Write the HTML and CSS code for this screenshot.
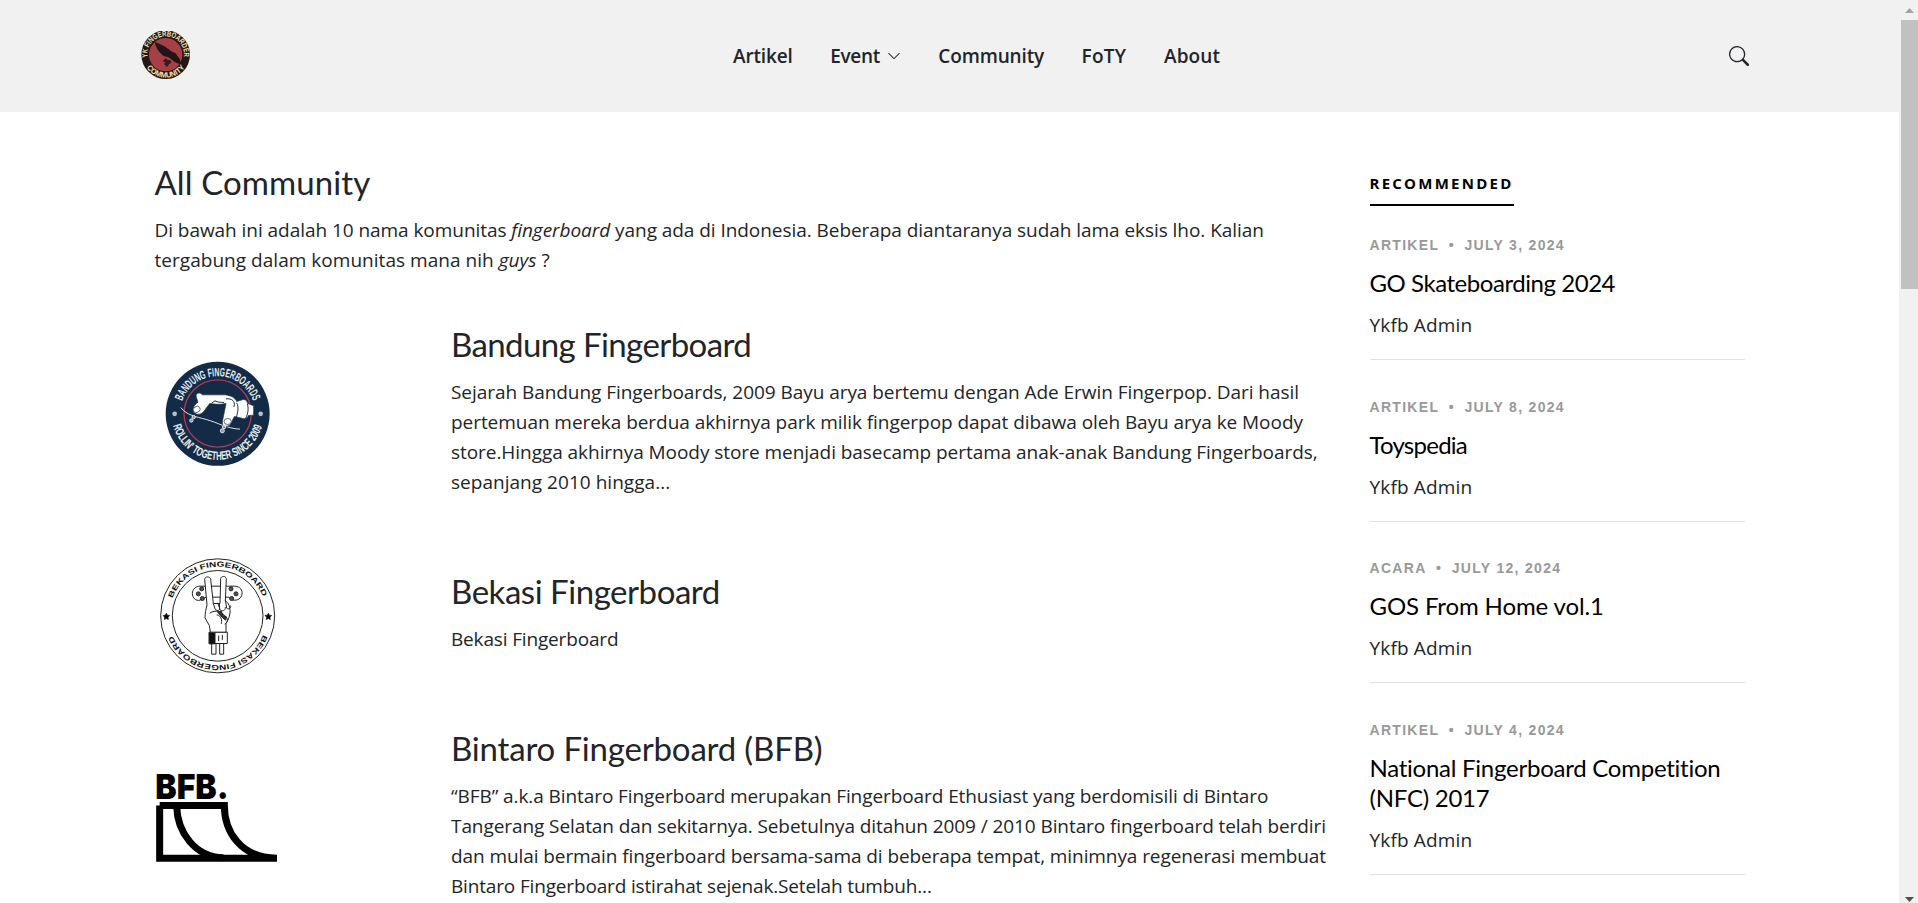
FILE: index.html
```html
<!DOCTYPE html>
<html lang="id">
<head>
<meta charset="utf-8">
<title>All Community</title>
<link rel="stylesheet" href="styles.css">
</head>
<body>
<div class="window">
<div class="page">
  <header class="header">
    <a class="brand">
      <svg class="brand-logo" viewBox="60 63 150 150">
        <defs>
          <path id="yk-top" d="M82.700 142.500A55 55 0 1 1 191.300 142.500"/>
          <path id="yk-bottom" d="M73.100 160A69 69 0 0 0 200.900 160"/>
        </defs>
        <circle cx="137" cy="134" r="73" fill="#251714"/>
        <circle cx="137" cy="134" r="50" fill="#a54146"/>
        <path d="M104 96c14 5 27 10 38 19 8 7 15 12 24 14l13 18 5 17-20-8-15-12c-5-4-12-4-18-6-10-8-21-17-27-42z" fill="#251417"/>
        <path d="M128 154l8-9 8 5 8 1 2 8-7 3-4 8-6-2-5-6 4-5z" fill="#3a1b1d"/>
        <text class="yk-text"><textPath href="#yk-top" textLength="188" lengthAdjust="spacingAndGlyphs">YK FINGERBOARDER</textPath></text>
        <text class="yk-text"><textPath href="#yk-bottom" startOffset="15" textLength="134" lengthAdjust="spacingAndGlyphs">COMMUNITY</textPath></text>
      </svg>
    </a>
    <nav class="nav">
      <a>Artikel</a>
      <a class="has-menu"><span class="nav-event">Event</span><svg class="chevron" viewBox="0 0 16 16"><path fill-rule="evenodd" d="M1.646 4.646a.5.5 0 0 1 .708 0L8 10.293l5.646-5.647a.5.5 0 0 1 .708.708l-6 6a.5.5 0 0 1-.708 0l-6-6a.5.5 0 0 1 0-.708z"/></svg></a>
      <a>Community</a>
      <a class="nav-foty">FoTY</a>
      <a class="nav-about">About</a>
    </nav>
    <svg class="search" viewBox="0 0 16 16"><path d="M11.742 10.344a6.500 6.500 0 1 0-1.397 1.398h-.001c.03.04.062.078.098.115l3.850 3.850a1 1 0 0 0 1.415-1.414l-3.850-3.850a1.007 1.007 0 0 0-.115-.1zM12 6.500a5.500 5.500 0 1 1-11 0 5.500 5.500 0 0 1 11 0z"/></svg>
  </header>

  <div class="content">
    <main class="main">
      <section class="intro">
        <h2 class="heading h-all">All Community</h2>
        <p class="text">Di bawah ini adalah 10 nama komunitas <em>fingerboard</em> yang ada di Indonesia. Beberapa diantaranya sudah lama eksis lho. Kalian<br><span class="loose">tergabung dalam komunitas mana nih <em>guys</em> ?</span></p>
      </section>

      <article class="row">
        <svg class="thumb" viewBox="45 31.500 375 375">
          <defs>
            <path id="bd-top" d="M126.600 182A113 113 0 0 1 339.400 182"/>
            <path id="bd-bottom" d="M99.500 255A138 138 0 0 0 366.500 255"/>
          </defs>
          <circle cx="233" cy="220" r="156" fill="#132b47"/>
          <circle cx="233" cy="219" r="101" fill="none" stroke="#a83c55" stroke-width="4"/>
          <circle cx="104" cy="220" r="7" fill="#b9c1cb"/><circle cx="362" cy="220" r="7" fill="#b9c1cb"/>
          <path d="M122 201c20 24 44 27 77 36s62 27 101 29" fill="none" stroke="#dfe4e9" stroke-width="3"/>
          <g fill="#fff" stroke="#132b47" stroke-width="2">
            <path d="M169 170c-4-13 12-16 18-7l69 0c18 3 30 9 34 20l16-5c9-3 15 2 17 11l18 7v28l-16 1c-3 10-13 11-20 8l-22-5-9 18c-4 13-22 15-26 6-3-7 2-20 3-28l7-35c-17 4-34 2-49 0l-17 23c-7 10-22 13-30 4-8-10 2-25 12-31z"/>
            <path d="M215 188l10-7c9 5 18 4 27 5M290 187c8 14 2 32-1 44M322 190c4 12 3 29-5 43M258 175c17-2 29 7 24 24" fill="none" stroke-width="3"/>
            <ellipse cx="170" cy="207" rx="11" ry="9" transform="rotate(-35 170 207)"/>
            <ellipse cx="263" cy="243" rx="11" ry="9"/>
          </g>
          <g fill="#8d99a8" stroke="#dfe4e9" stroke-width="3"><circle cx="161" cy="230" r="5"/><circle cx="154" cy="240" r="5"/><circle cx="252" cy="260" r="5"/><circle cx="247" cy="271" r="6"/></g>
          <text class="bd-text"><textPath href="#bd-top" textLength="277" lengthAdjust="spacingAndGlyphs">BANDUNG FINGERBOARDS</textPath></text>
          <text class="bd-text"><textPath href="#bd-bottom" textLength="360" lengthAdjust="spacingAndGlyphs">ROLLIN' TOGETHER SINCE 2009</textPath></text>
        </svg>
        <div class="body">
          <h2 class="heading h-bandung">Bandung Fingerboard</h2>
          <p class="text">Sejarah Bandung Fingerboards, 2009 Bayu arya bertemu dengan Ade Erwin Fingerpop. Dari hasil<br>pertemuan mereka berdua akhirnya park milik fingerpop dapat dibawa oleh Bayu arya ke Moody<br>store.Hingga akhirnya Moody store menjadi basecamp pertama anak-anak Bandung Fingerboards,<br><span class="loose">sepanjang 2010 hingga...</span></p>
        </div>
      </article>

      <article class="row">
        <svg class="thumb" viewBox="45 37.500 375 375">
          <defs>
            <path id="bk-top" d="M97.500 173A146 146 0 0 1 370.500 173"/>
            <path id="bk-bottom" d="M369.600 283A148 148 0 0 1 96.400 283"/>
          </defs>
          <g fill="none" stroke="#222">
            <circle cx="233" cy="226" r="171" stroke-width="3"/>
            <circle cx="233" cy="226" r="136" stroke-width="3"/>
          </g>
          <path id="star" d="M79 218l3 6 7 1-5 5 1 7-6-3-6 3 1-7-5-5 7-1z" stroke="#111" stroke-width="2"/>
          <use href="#star" x="306"/>
          <g fill="#fff" stroke="#222" stroke-width="3">
            <path d="M184 137h100c17 1 24 12 22 24-2 14-14 19-26 18l-15-9h-67l-18 9c-13 3-23-7-23-20s12-24 27-22z"/>
            <g fill="#555"><circle cx="185" cy="145" r="6"/><circle cx="187" cy="174" r="6"/><circle cx="175" cy="160" r="6"/><circle cx="273" cy="145" r="6"/><circle cx="275" cy="174" r="6"/><circle cx="288" cy="160" r="6"/></g>
            <path d="M215 303h13v38h-13zM239 303h12v38h-12z"/>
            <path d="M210 275h52v34h-52z"/>
            <path d="M207 275h18v35h-18z" fill="#111"/>
            <path d="M211 275l-3-20-13-23c0-13 3-26 6-39l-7-77c1-9 16-9 18 0l8 73 20 0 2-75c1-8 15-8 17 0l-3 68c10 3 15 18 14 35-2 15-7 24-12 31v27z"/>
            <path d="M220 189l5 16c5 9 18 5 13-5l-5-13M238 188l1 18c6 9 18 5 17-6M256 178l4 25c5 4 13 2 12-8M209 218c18-12 36-4 46 8 9 7 10 20-1 25M230 223c15 1 16 18 14 27M236 285v17M247 283v15" fill="none"/>
            <path d="M233 215l10-4 6 14 10 4-2 10-9-7z" fill="#333"/>
          </g>
          <text class="bk-text"><textPath href="#bk-top" textLength="348" lengthAdjust="spacingAndGlyphs">BEKASI FINGERBOARD</textPath></text>
          <text class="bk-text"><textPath href="#bk-bottom" textLength="345" lengthAdjust="spacingAndGlyphs">BEKASI FINGERBOARD</textPath></text>
        </svg>
        <div class="body">
          <h2 class="heading h-bekasi">Bekasi Fingerboard</h2>
          <p class="text tight">Bekasi Fingerboard</p>
        </div>
      </article>

      <article class="row">
        <svg class="thumb" viewBox="45 12.500 375 375">
          <text class="bfb-text" x="46" y="146" textLength="220" lengthAdjust="spacingAndGlyphs">BFB.</text>
          <path d="M59 164H253C253 240 300 322 411 322H59V164" fill="none" stroke="#000" stroke-width="21"/>
          <path d="M110 166C112 244 164 318 250 321" fill="none" stroke="#000" stroke-width="21"/>
        </svg>
        <div class="body">
          <h2 class="heading h-bintaro">Bintaro Fingerboard (BFB)</h2>
          <p class="text snug">“BFB” a.k.a Bintaro Fingerboard merupakan Fingerboard Ethusiast yang berdomisili di Bintaro<br>Tangerang Selatan dan sekitarnya. Sebetulnya ditahun 2009 / 2010 Bintaro fingerboard telah berdiri<br>dan mulai bermain fingerboard bersama-sama di beberapa tempat, minimnya regenerasi membuat<br><span class="tight">Bintaro Fingerboard istirahat sejenak.Setelah tumbuh...</span></p>
        </div>
      </article>
    </main>

    <aside class="sidebar">
      <h3 class="side-title">RECOMMENDED</h3>
      <article class="post">
        <div class="meta"><span>ARTIKEL</span><span>•</span><span>JULY 3, 2024</span></div>
        <h4 class="post-title">GO Skateboarding 2024</h4>
        <div class="author">Ykfb Admin</div>
      </article>
      <article class="post">
        <div class="meta"><span>ARTIKEL</span><span>•</span><span>JULY 8, 2024</span></div>
        <h4 class="post-title t-toys">Toyspedia</h4>
        <div class="author">Ykfb Admin</div>
      </article>
      <article class="post">
        <div class="meta"><span>ACARA</span><span>•</span><span>JULY 12, 2024</span></div>
        <h4 class="post-title t-gos">GOS From Home vol.1</h4>
        <div class="author">Ykfb Admin</div>
      </article>
      <article class="post">
        <div class="meta"><span>ARTIKEL</span><span>•</span><span>JULY 4, 2024</span></div>
        <h4 class="post-title t-nfc">National Fingerboard Competition<br>(NFC) 2017</h4>
        <div class="author">Ykfb Admin</div>
      </article>
    </aside>
  </div>
</div>
<div class="scrollbar">
  <svg class="arrow" viewBox="0 0 17 20"><path d="M4 13l4.500-5 4.500 5z" fill="#a3a3a3"/></svg>
  <div class="scroll-thumb"></div>
  <svg class="arrow arrow-down" viewBox="0 0 17 20"><path d="M4 14h9l-4.500 5z" fill="#505050"/></svg>
</div>
</div>
</body>
</html>
```
FILE: styles.css
```css
* { box-sizing: border-box; }
body {
  margin: 0;
  background: #fff;
  color: #212529;
  font-family: "Open Sans", "Noto Sans", sans-serif;
  font-size: 19px;
  line-height: 30px;
}
h2, h3, h4, p { margin: 0; font-weight: 400; }
.window { display: flex; height: 903px; overflow: hidden; }
.page { flex: 1; min-width: 0; overflow: hidden; }

.header {
  display: grid;
  grid-template-columns: 593px 1fr 20px;
  align-items: center;
  height: 112px;
  padding: 0 150px 0 140px;
  background: #f1f1f1;
}
.brand { display: flex; }
.brand-logo { width: 50px; height: 50px; }
.yk-text { font: bold 23px "Liberation Sans", sans-serif; fill: #eee3bd; }
.nav { display: flex; gap: 37.5px; font-weight: 600; letter-spacing: -0.15px; }
.has-menu { display: flex; align-items: center; }
.nav-event { letter-spacing: -0.32px; }
.nav-foty { letter-spacing: 0.3px; }
.nav-about { letter-spacing: 0.15px; }
.chevron { width: 14px; height: 14px; margin-left: 7px; fill: #212529; }
.search { width: 20px; height: 20px; fill: #212529; }

.content { display: flex; padding: 50px 0 0 154.5px; }
.main { width: 1215px; flex: none; white-space: nowrap; }
.intro { height: 162px; }
.heading {
  margin-bottom: 13px;
  font-family: Lato, sans-serif;
  font-size: 33px;
  line-height: 40px;
  font-variant-ligatures: none;
}
.h-all { letter-spacing: 0.1px; }
.h-bandung { letter-spacing: -0.6px; }
.h-bekasi { letter-spacing: -0.46px; }
.h-bintaro { letter-spacing: -0.18px; }
.text { letter-spacing: -0.052px; }
.loose { letter-spacing: 0.03px; }
.snug { letter-spacing: -0.083px; }
.tight { letter-spacing: -0.16px; }
.row {
  display: grid;
  grid-template-columns: 296.5px 1fr;
  align-items: center;
  margin-bottom: 50px;
}
.thumb { display: block; width: 125px; height: 125px; overflow: visible; }
.body { padding-bottom: 6px; }
.bd-text { font: bold 36px "Liberation Sans Narrow", "Liberation Sans", sans-serif; fill: #e9edf1; }
.bk-text { font: bold 22px "Liberation Sans", sans-serif; fill: #111; }
.bfb-text { font: 900 104px Inter, "Liberation Sans", sans-serif; fill: #000; }

.sidebar { width: 375px; padding-top: 11px; }
.side-title {
  width: 144px;
  margin-bottom: 29px;
  padding-bottom: 11px;
  border-bottom: 2px solid #000;
  color: #000;
  font-size: 15px;
  font-weight: 700;
  line-height: 20px;
  letter-spacing: 2.25px;
}
.post {
  margin-bottom: 36.67px;
  padding-bottom: 19px;
  border-bottom: 1px solid #dee2e6;
}
.meta {
  display: flex;
  gap: 9.5px;
  margin-bottom: 13px;
  color: #999;
  font: bold 14px/20px "Liberation Sans", sans-serif;
  letter-spacing: 1.3px;
}
.post-title {
  margin-bottom: 12px;
  color: #000;
  font-family: Lato, sans-serif;
  font-size: 24px;
  line-height: 30px;
  letter-spacing: -0.45px;
  font-variant-ligatures: none;
  white-space: nowrap;
}
.t-toys { letter-spacing: -0.75px; }
.t-gos { letter-spacing: -0.12px; }
.t-nfc { letter-spacing: -0.25px; }
.author { letter-spacing: 0.15px; }

.scrollbar {
  display: flex;
  flex-direction: column;
  width: 19px;
  padding-left: 2px;
  background: #f1f1f1;
}
.arrow { width: 17px; height: 20px; }
.scroll-thumb { height: 269px; background: #c1c1c1; }
.arrow-down { margin-top: auto; }
```
